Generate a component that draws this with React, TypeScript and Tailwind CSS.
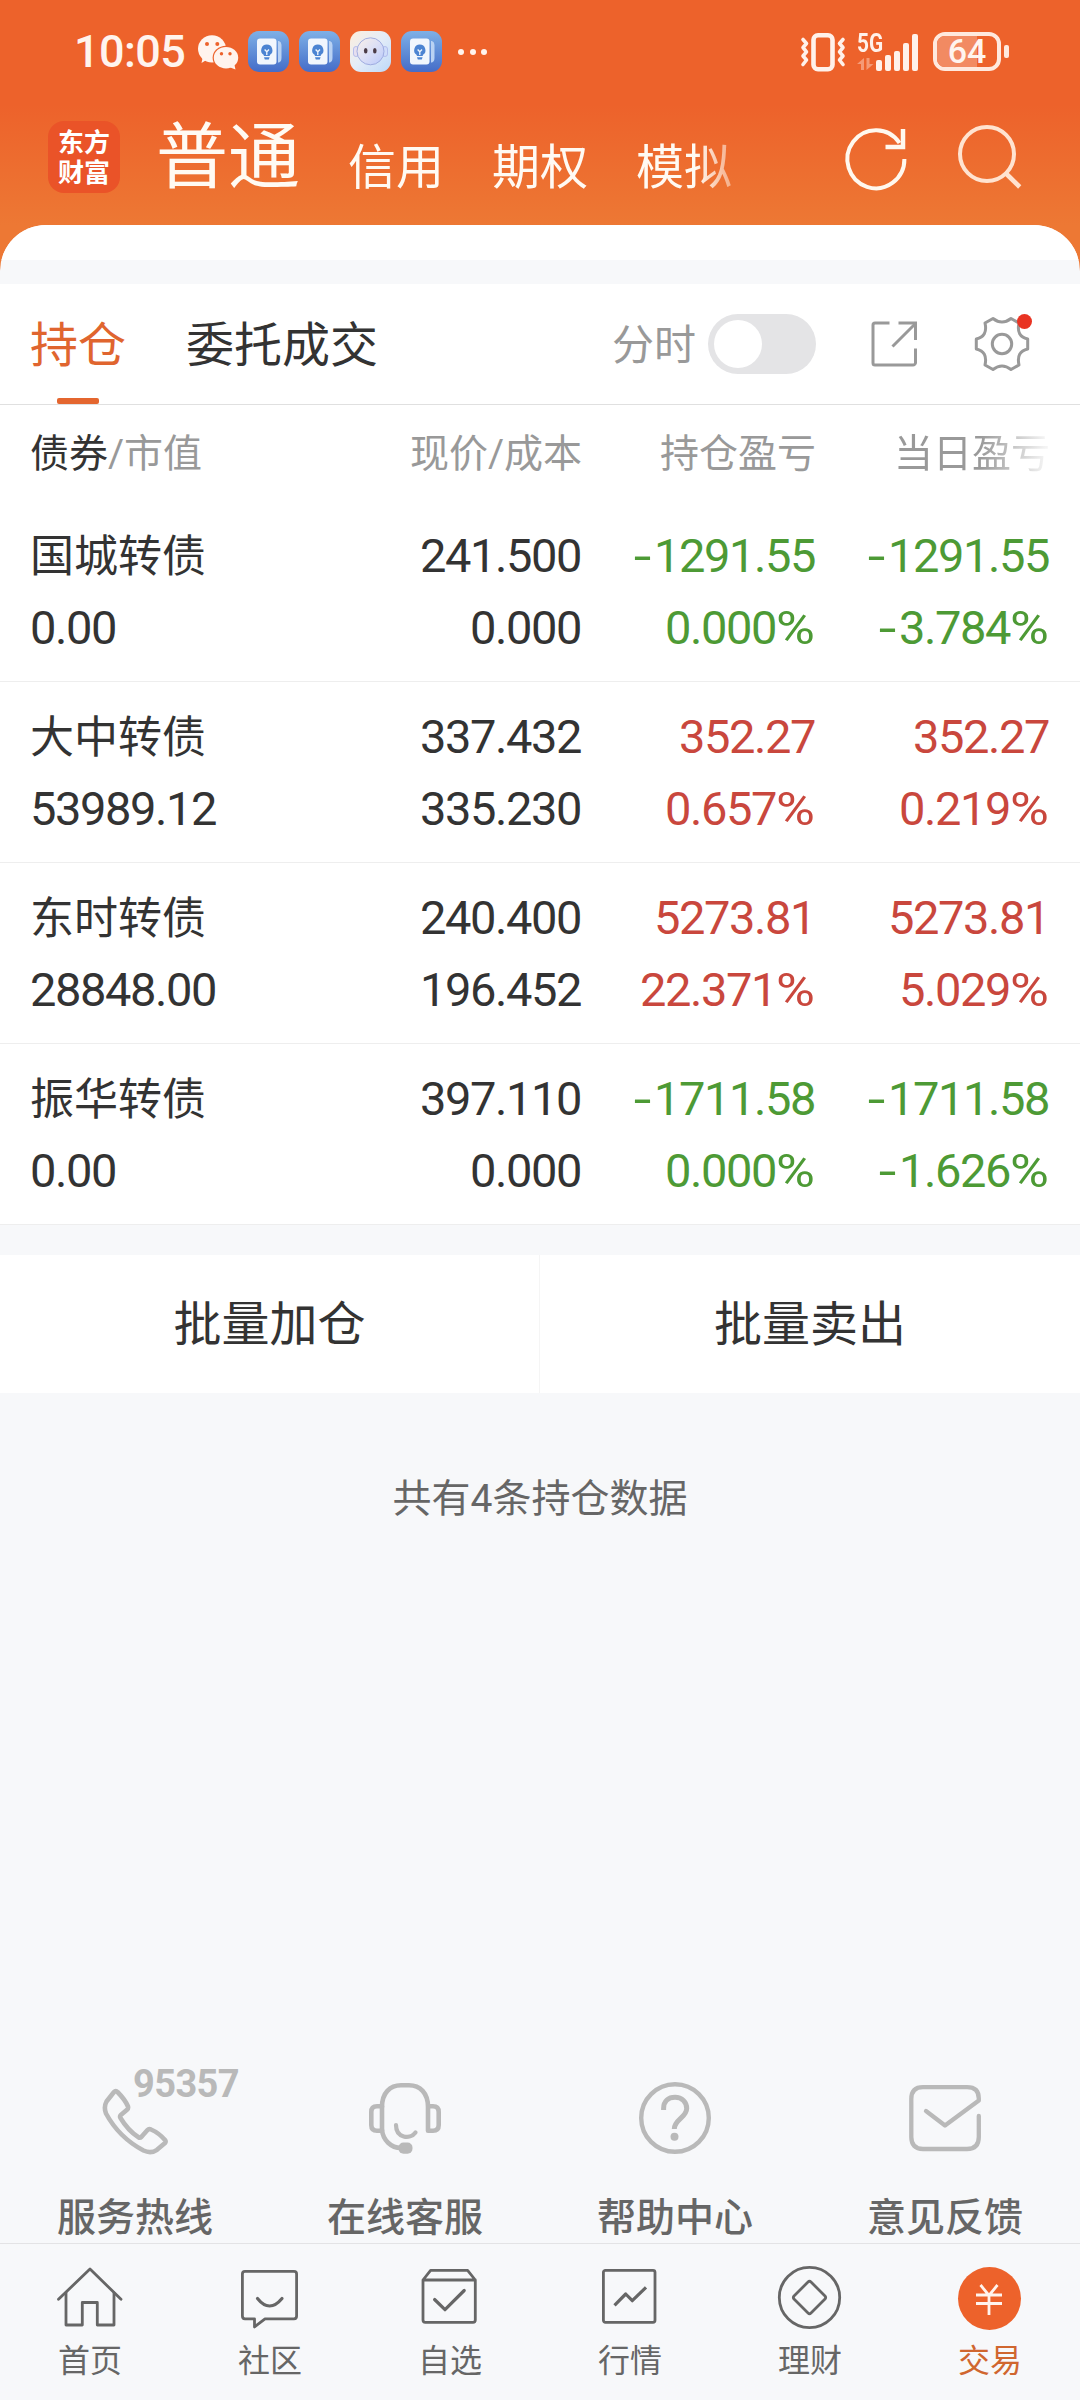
import React from "react";

const INK = "text-[#333333]";
const RED = "text-[#c9473d]";
const GREEN = "text-[#4d9a35]";

type Holding = {
  name: string;
  value: string;
  price: string;
  cost: string;
  profit: string;
  profitRate: string;
  day: string;
  dayRate: string;
  tone: string;
};

const holdings: Holding[] = [
  { name: "国城转债", value: "0.00", price: "241.500", cost: "0.000", profit: "-1291.55", profitRate: "0.000%", day: "-1291.55", dayRate: "-3.784%", tone: GREEN },
  { name: "大中转债", value: "53989.12", price: "337.432", cost: "335.230", profit: "352.27", profitRate: "0.657%", day: "352.27", dayRate: "0.219%", tone: RED },
  { name: "东时转债", value: "28848.00", price: "240.400", cost: "196.452", profit: "5273.81", profitRate: "22.371%", day: "5273.81", dayRate: "5.029%", tone: RED },
  { name: "振华转债", value: "0.00", price: "397.110", cost: "0.000", profit: "-1711.58", profitRate: "0.000%", day: "-1711.58", dayRate: "-1.626%", tone: GREEN },
];

/* ---------- status bar ---------- */

function WechatIcon() {
  return (
    <svg width="44" height="40" viewBox="0 0 44 40" className="shrink-0">
      <path d="M7 24 L5.5 31 L12 27 Z" fill="#fff4ee" />
      <ellipse cx="16" cy="16.8" rx="14" ry="13.6" fill="#fff4ee" />
      <circle cx="11" cy="12" r="2" fill="#ed622b" />
      <circle cx="21.3" cy="12" r="2" fill="#ed622b" />
      <ellipse cx="30" cy="25.7" rx="13.4" ry="12" fill="#ed622b" />
      <ellipse cx="30" cy="25.7" rx="12.2" ry="10.8" fill="#fff4ee" />
      <path d="M33 35 L39.5 37.5 L38 31 Z" fill="#fff4ee" />
      <circle cx="25.5" cy="21.7" r="1.7" fill="#ed622b" />
      <circle cx="34" cy="21.7" r="1.7" fill="#ed622b" />
    </svg>
  );
}

function IdeaAppIcon() {
  return (
    <div className="flex size-[41px] shrink-0 items-center justify-center rounded-[11px] bg-gradient-to-b from-[#7fb0e6] to-[#456cc8] pl-[2px]">
      <svg width="25" height="27" viewBox="0 0 25 27">
        <rect x="0" y="0.5" width="19.5" height="26" rx="3" fill="#f1f6fd" />
        <path d="M21 3 H22 Q24.5 4 24.5 7 V20 Q24.5 23.500 22 24.500 H21 Z" fill="#b9d2f3" />
        <path d="M9.800 6.500 A5.700 5.700 0 0 1 12.800 17 V18 H6.800 V17 A5.700 5.700 0 0 1 9.800 6.500 Z" fill="#4c84d2" />
        <path d="M7 19.300 H12.600 L11.800 21.500 H7.800 Z" fill="#4c84d2" />
        <path d="M7.600 11.500 L9.800 13.800 L12 11.500 M9.800 13.800 V17" stroke="#f1f6fd" strokeWidth="1.300" fill="none" />
      </svg>
    </div>
  );
}

function RobotAppIcon() {
  return (
    <div className="size-[41px] shrink-0 rounded-[11px] bg-gradient-to-br from-[#fdeedd] via-[#e3ecf8] to-[#bcd8f8]">
      <svg width="41" height="41" viewBox="0 0 41 41">
        <defs>
          <linearGradient id="face" x1="0" y1="0" x2="1" y2="1">
            <stop offset="0" stopColor="#fbf0e8" />
            <stop offset="0.5" stopColor="#dcdff6" />
            <stop offset="1" stopColor="#b9c9fa" />
          </linearGradient>
        </defs>
        <rect x="3.500" y="15.500" width="5" height="10" rx="2.500" fill="#e6dff0" stroke="#a9b4ea" strokeWidth="0.800" />
        <rect x="32.500" y="15.500" width="5" height="10" rx="2.500" fill="#cfdcfa" stroke="#a9b4ea" strokeWidth="0.800" />
        <circle cx="20.500" cy="20.300" r="13.500" fill="url(#face)" stroke="#98a6dd" strokeWidth="0.900" />
        <ellipse cx="15.700" cy="19.800" rx="1.800" ry="2.800" fill="#4b3b46" />
        <ellipse cx="24.800" cy="19.800" rx="1.800" ry="2.800" fill="#4b3b46" />
      </svg>
    </div>
  );
}

function VibrateIcon() {
  return (
    <svg width="46" height="40" viewBox="0 0 46 40" className="shrink-0" fill="none" stroke="#fff1ea">
      <rect x="13.500" y="3.200" width="19" height="34" rx="4.500" strokeWidth="4.600" />
      <path d="M3 7.500 L6.500 11.500 L3 15.500 L6.500 19.800 L3 24 L6.500 28 L3 32.500" strokeWidth="3.600" strokeLinecap="round" strokeLinejoin="round" />
      <path d="M43 7.500 L39.500 11.500 L43 15.500 L39.500 19.800 L43 24 L39.500 28 L43 32.500" strokeWidth="3.600" strokeLinecap="round" strokeLinejoin="round" />
    </svg>
  );
}

function StatusBar() {
  return (
    <div className="flex h-[102px] items-center pt-px pr-[71px] pl-[74px]">
      <div className="w-[122px] text-[45px] leading-[50px] font-medium tracking-[-0.600px] whitespace-nowrap text-[#fff4ee]">10:05</div>
      <WechatIcon />
      <div className="ml-[8px] flex gap-[10px]">
        <IdeaAppIcon />
        <IdeaAppIcon />
        <RobotAppIcon />
        <IdeaAppIcon />
      </div>
      <div className="ml-[16px] flex gap-[5.500px]">
        <span className="size-[6px] rounded-full bg-[#fff4ee]" />
        <span className="size-[6px] rounded-full bg-[#fff4ee]" />
        <span className="size-[6px] rounded-full bg-[#fff4ee]" />
      </div>
      <div className="ml-auto flex items-center">
        <VibrateIcon />
        <div className="relative ml-[11px] h-[40px] w-[63px]">
          <span className="absolute top-[-1px] left-0 origin-left scale-x-[0.8] text-[26px] leading-[24px] font-bold text-[#fff1ea]">5G</span>
          <svg width="17" height="13" viewBox="0 0 17 13" className="absolute bottom-[1px] left-0" fill="#f59a76">
            <path d="M0 6 L7 0 V12 H4 V6 Z" />
            <path d="M16.500 6 L9.500 12 V0 H12.500 V6 Z" />
          </svg>
          <div className="absolute bottom-[1px] left-[18.500px] flex items-end gap-[3.200px]">
            <span className="h-[11px] w-[6px] rounded-[2px] bg-[#fff1ea]" />
            <span className="h-[16px] w-[6px] rounded-[2px] bg-[#fff1ea]" />
            <span className="h-[20px] w-[6px] rounded-[2px] bg-[#fff1ea]" />
            <span className="h-[28px] w-[6px] rounded-[2px] bg-[#fff1ea]" />
            <span className="h-[37px] w-[6px] rounded-[2px] bg-[#fff1ea]" />
          </div>
        </div>
        <div className="relative ml-[13px] flex h-[39px] w-[68px] items-center justify-center overflow-hidden rounded-[12px] border-[4px] border-[#ffe9de]">
          <span className="absolute inset-y-0 left-0 w-[40px] bg-[#f28a62]" />
          <span className="relative text-[34px] leading-[31px] font-medium text-[#fff4ee]">64</span>
        </div>
        <span className="ml-[3px] h-[13px] w-[5px] rounded-[2px] bg-[#ffe9de]" />
      </div>
    </div>
  );
}

/* ---------- header ---------- */

function Header() {
  return (
    <div className="flex h-[123px] items-start pl-[48px]">
      <div className="mt-[19px] flex size-[72px] flex-col items-center justify-center rounded-[16px] bg-[#ea5328] pt-px text-[26px] leading-[30px] font-bold text-white">
        <span>东方</span>
        <span>财富</span>
      </div>
      <nav className="mt-[6px] ml-[36px] flex h-[110px] w-[611px] items-baseline gap-[48px] overflow-hidden [mask-image:linear-gradient(to_right,black_0,black_540px,transparent_604px)] text-[48px] leading-[100px] whitespace-nowrap text-[#fffaf3]">
        <span className="text-[72px]">普通</span>
        <span className="translate-y-[2px]">信用</span>
        <span className="translate-y-[2px]">期权</span>
        <span className="translate-y-[2px]">模拟</span>
      </nav>
      <svg width="72" height="72" viewBox="0 0 72 72" className="mt-[20px] ml-[73px]" fill="none" stroke="#fff8ee" strokeWidth="4">
        <path d="M64.400 37 A28.500 29 0 1 1 59.500 21" />
        <path d="M63 7 V25 H45.500" strokeWidth="4.500" />
      </svg>
      <svg width="72" height="72" viewBox="0 0 72 72" className="mt-[20px] ml-[39px]" fill="none" stroke="#ffe3d0" strokeWidth="4">
        <circle cx="36" cy="32" r="27" />
        <path d="M54.500 51 L68.700 65" strokeWidth="4.600" />
      </svg>
    </div>
  );
}

/* ---------- tabs ---------- */

function TabBar() {
  return (
    <div className="flex h-[121px] items-start border-b border-[#e0e0e0] pl-[30px]">
      <div className="flex h-[120px] flex-col items-center text-[#e0652f]">
        <span className="mt-[32px] text-[48px] leading-[60px]">持仓</span>
        <span className="mt-auto h-[6px] w-[42px] rounded-[2px] bg-[#e4662f]" />
      </div>
      <span className={`mt-[32px] ml-[60px] text-[48px] leading-[60px] ${INK}`}>委托成交</span>
      <span className="mt-[32px] ml-auto text-[42px] leading-[60px] text-[#999999]">分时</span>
      <div className="mt-[30px] ml-[12px] h-[60px] w-[108px] rounded-full bg-[#e4e4e6] p-[6px]">
        <div className="size-[48px] rounded-full bg-white" />
      </div>
      <svg width="48" height="48" viewBox="0 0 48 48" className="mt-[36px] ml-[54px]" fill="none" stroke="#999999" strokeWidth="3">
        <path d="M19.500 3 H5 Q3 3 3 5 V43 Q3 45 5 45 H43 Q45 45 45.500 43 V28.500" />
        <path d="M28.500 3 H45.500 V20" />
        <path d="M45 4 L22.500 26.500" />
      </svg>
      <div className="relative mt-[30px] mr-[48px] ml-[54px] size-[60px]">
        <svg width="60" height="60" viewBox="-30 -30 60 60" fill="none" stroke="#999999" strokeWidth="3" strokeLinejoin="round">
          <path d="M-9 -25.500 Q0 -18.500 9 -25.500 L17 -21 Q14 -7.500 25.700 -5 V5 Q14 7.500 17 21 L9 25.500 Q0 18.500 -9 25.500 L-17 21 Q-14 7.500 -25.700 5 V-5 Q-14 -7.500 -17 -21 Z" />
          <circle r="9.700" />
        </svg>
        <span className="absolute top-0 left-[45px] size-[15px] rounded-full bg-[#e93423]" />
      </div>
    </div>
  );
}

/* ---------- holdings table ---------- */

function Num({ children }: { children: string }) {
  const negative = children.startsWith("-");
  const percent = children.endsWith("%");
  const digits = children.slice(negative ? 1 : 0, percent ? -1 : undefined);
  return (
    <span className="text-[47px] leading-[60px] tracking-[-1.400px]">
      {negative && <span className="inline-block w-[23px] -translate-x-px scale-x-[1.35] text-center">-</span>}
      {digits}
      {percent && <span className="mr-[6px] inline-block origin-left scale-x-[1.130]">%</span>}
    </span>
  );
}

function TableHead() {
  return (
    <div className="flex h-[96px] items-center pt-[2px] pr-[30px] pl-[30px] text-[39px] leading-[60px] text-[#999999]">
      <div className="w-[220px]">
        <span className={INK}>债券</span>/市值
      </div>
      <div className="w-[332px] text-right">现价/成本</div>
      <div className="w-[234px] text-right">持仓盈亏</div>
      <div className="w-[234px] bg-gradient-to-r from-[#999999] from-70% to-[#f4f4f4] to-98% bg-clip-text text-right text-transparent">当日盈亏</div>
    </div>
  );
}

function HoldingRow({ h }: { h: Holding }) {
  return (
    <div className={`flex h-[181px] border-b border-[#eeeeee] pr-[31px] pl-[30px] ${INK}`}>
      <div className="flex w-[220px] flex-col gap-[10px] pt-[26px]">
        <span className="text-[44px] leading-[61px]">{h.name}</span>
        <Num>{h.value}</Num>
      </div>
      <div className="flex w-[331px] flex-col items-end gap-[12px] pt-[25px]">
        <Num>{h.price}</Num>
        <Num>{h.cost}</Num>
      </div>
      <div className={`flex w-[234px] flex-col items-end gap-[12px] pt-[25px] ${h.tone}`}>
        <Num>{h.profit}</Num>
        <Num>{h.profitRate}</Num>
      </div>
      <div className={`flex w-[234px] flex-col items-end gap-[12px] pt-[25px] ${h.tone}`}>
        <Num>{h.day}</Num>
        <Num>{h.dayRate}</Num>
      </div>
    </div>
  );
}

/* ---------- service shortcuts ---------- */

function Service({ label, badge, children }: { label: string; badge?: string; children: React.ReactNode }) {
  return (
    <div className="relative flex w-[270px] flex-col items-center">
      {badge && (
        <span className="absolute top-[-18px] left-[133px] text-[38px] leading-[40px] font-bold tracking-[-0.600px] text-[#b9b9b9]">{badge}</span>
      )}
      <svg width="72" height="74" viewBox="0 0 72 74" className="shrink-0" fill="none" stroke="#b9b9b9" strokeWidth="4.600" strokeLinecap="round" strokeLinejoin="round">
        {children}
      </svg>
      <span className="mt-[32px] shrink-0 text-[39px] leading-[60px] font-medium text-[#666666]">{label}</span>
    </div>
  );
}

function Services() {
  return (
    <div className="mt-auto flex h-[161px]">
      <Service label="服务热线" badge="95357">
        <path d="M15 10 Q16.800 8 18.500 10 Q26 17.500 29 24.500 Q29.500 26.500 28 27.800 L21.800 33 Q20.500 34.500 21.500 36 Q29 48.500 39.500 55.300 Q41 56.300 42.500 54.800 L48.500 48 Q50 46.300 52 47.500 Q60 51 66 58 Q67.200 59.500 66 61 L58 67.800 Q52 72 44.500 68.500 Q20 55.500 7 31.500 Q4.500 25 7.500 19.500 Z" />
      </Service>
      <Service label="在线客服">
        <path d="M13 25 C13 11 21 3.300 32 3.300 H40 C51 3.300 59 11 59 25 V48.700 H64 Q69.700 48.700 69.700 43 V30 Q69.700 24.300 64 24.300 H59" />
        <path d="M13 24.300 H8 Q2.300 24.300 2.300 30 V43 Q2.300 48.700 8 48.700 H13 V24.300" />
        <path d="M13 48 C14 58 22 66 32 66" />
        <path d="M27 43 C27 56 41 58 46.500 50.500" strokeWidth="4.200" />
        <rect x="29.500" y="60.500" width="14" height="11.200" rx="5" fill="#b9b9b9" stroke="none" />
      </Service>
      <Service label="帮助中心">
        <circle cx="36" cy="36" r="33.800" strokeWidth="4.400" />
        <path d="M24.600 28 V26.500 C24.600 19 29.500 15.300 36 15.300 C43 15.300 47.700 20 47.700 26.500 C47.700 35.500 35.300 37.500 35.300 47" strokeWidth="5" strokeLinecap="butt" />
        <circle cx="35.500" cy="54.700" r="4" fill="#b9b9b9" stroke="none" />
      </Service>
      <Service label="意见反馈">
        <path d="M69.800 34 V55 Q69.800 67 58 67 H14 Q2.300 67 2.300 55 V17 Q2.300 5.200 14 5.200 H58 Q69.800 5.200 69.800 16.500 V18.500 L36 43.500 L17 29" strokeWidth="4.300" />
      </Service>
    </div>
  );
}

/* ---------- bottom navigation ---------- */

function NavItem({ label, active, children }: { label: string; active?: boolean; children: React.ReactNode }) {
  return (
    <div className="flex w-[180px] flex-col items-center pt-[18px]">
      {active ? (
        <div className="flex h-[72px] items-center pr-[2px]">{children}</div>
      ) : (
        <svg width="72" height="72" viewBox="0 0 72 72" fill="none" stroke="#666666" strokeWidth="2.800" strokeLinecap="round" strokeLinejoin="round">
          {children}
        </svg>
      )}
      <span className={`mt-[7px] text-[32px] leading-[40px] ${active ? "text-[#d0662f]" : "text-[#666666]"}`}>{label}</span>
    </div>
  );
}

function BottomNav() {
  return (
    <div className="relative flex h-[157px] shrink-0 border-t border-[#e3e3e5]">
      <NavItem label="首页">
        <path d="M4.500 37.300 L36 7 L67 37.300" />
        <path d="M12 31 V63 H28.300 V40.500 H43.300 V63 H60 V31" />
      </NavItem>
      <NavItem label="社区">
        <path d="M11 9.300 H60 Q62.600 9.300 62.600 12 V54 Q62.600 56.800 60 56.800 H31 L20.500 65 V56.800 H11 Q8.400 56.800 8.400 54 V12 Q8.400 9.300 11 9.300 Z" />
        <path d="M23.500 36.500 Q35.500 51.500 48 36.500" strokeWidth="3.200" />
      </NavItem>
      <NavItem label="自选">
        <path d="M9 18 L16.600 8.300 H53.600 L61.300 18 V58 Q61.300 60.300 59 60.300 H11.300 Q9 60.300 9 58 Z M9 18 H61.300" />
        <path d="M20.600 37.500 L31 47.700 L50.200 28.500" strokeWidth="3.200" />
      </NavItem>
      <NavItem label="行情">
        <rect x="9.400" y="8.300" width="51.600" height="52" rx="2" />
        <path d="M20.500 43.300 L31.700 32 L38.300 38.700 L52 25.300" strokeWidth="3.200" strokeLinecap="butt" />
      </NavItem>
      <NavItem label="理财">
        <circle cx="35.500" cy="35.500" r="30.200" />
        <path d="M34 20 Q35.500 18.500 37 20 L51 34 Q52.300 35.500 51 37 L37 51 Q35.500 52.500 34 51 L20 37 Q18.700 35.500 20 34 Z" />
      </NavItem>
      <NavItem label="交易" active>
        <div className="flex size-[63px] items-center justify-center rounded-full bg-[#ed622b]">
          <svg width="28" height="32" viewBox="0 0 28 32" fill="none" stroke="#fff4ee" strokeWidth="2.800" className="translate-y-[2px]">
            <path d="M5.500 1 L14 11.500 L22.500 1 M14 11.500 V31 M1 11 H27 M1 19.500 H27" />
          </svg>
        </div>
      </NavItem>
    </div>
  );
}

export default function App() {
  return (
    <div className="flex h-[2400px] w-[1080px] flex-col overflow-hidden bg-[#f7f8fa] font-[Roboto,'Noto_Sans_CJK_SC',sans-serif]">
      <div className="h-[275px] shrink-0 bg-[linear-gradient(to_bottom,#ed622b_0,#ed622b_105px,#ed7834_225px,#ed7834_275px)]">
        <StatusBar />
        <Header />
        <div className="flex h-[50px] flex-col overflow-hidden rounded-t-[46px] bg-[#f7f8fa]">
          <div className="h-[35px] bg-white" />
        </div>
      </div>

      <div className="mt-[9px] bg-white">
        <TabBar />
        <TableHead />
        {holdings.map((h) => (
          <HoldingRow key={h.name} h={h} />
        ))}
      </div>

      <div className={`mt-[30px] flex h-[138px] items-center bg-white text-[48px] leading-[60px] ${INK}`}>
        <span className="flex h-full w-[540px] items-center justify-center border-r border-[#f5f5f5] pt-[2px]">批量加仓</span>
        <span className="flex h-full w-[540px] items-center justify-center pt-[2px]">批量卖出</span>
      </div>

      <div className="mt-[76px] text-center text-[39px] leading-[60px] text-[#666666]">共有4条持仓数据</div>

      <Services />
      <BottomNav />
    </div>
  );
}
